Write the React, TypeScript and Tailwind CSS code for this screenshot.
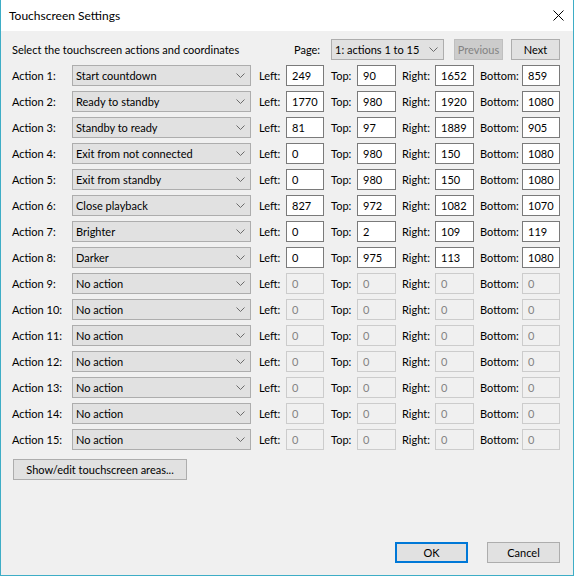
const actions: { name: string; coords: number[] }[] = [
  { name: "Start countdown", coords: [249, 90, 1652, 859] },
  { name: "Ready to standby", coords: [1770, 980, 1920, 1080] },
  { name: "Standby to ready", coords: [81, 97, 1889, 905] },
  { name: "Exit from not connected", coords: [0, 980, 150, 1080] },
  { name: "Exit from standby", coords: [0, 980, 150, 1080] },
  { name: "Close playback", coords: [827, 972, 1082, 1070] },
  { name: "Brighter", coords: [0, 2, 109, 119] },
  { name: "Darker", coords: [0, 975, 113, 1080] },
];

const rows = Array.from({ length: 15 }, (_, i) => actions[i] ?? { name: "No action", coords: [0, 0, 0, 0] });

function Chevron() {
  return (
    <svg width="9" height="5" viewBox="0 0 9 5" className="shrink-0">
      <path d="M0.5 0.5 L4.5 4.5 L8.5 0.5" fill="none" stroke="#6b6b6b" strokeWidth="1" />
    </svg>
  );
}

function Combo({ value, width }: { value: string; width: string }) {
  return (
    <div className={`flex h-[21px] ${width} items-center justify-between border border-[#adadad] bg-[#e1e1e1] pl-[3px] pr-[5px]`}>
      <span>{value}</span>
      <Chevron />
    </div>
  );
}

function Field({ value, enabled, width }: { value: number; enabled: boolean; width: string }) {
  return (
    <div
      className={`flex h-[21px] ${width} items-center pl-[5px] ${
        enabled ? "border border-[#7a7a7a] bg-white text-black" : "border border-[#cccccc] bg-[#f0f0f0] text-[#838383]"
      }`}
    >
      {value}
    </div>
  );
}

export default function App() {
  return (
    <div
      className="flex h-[576px] w-[574px] flex-col border-x border-b border-[#3eadc6] bg-[#f0f0f0] text-[11px] leading-none text-black"
      style={{ fontFamily: 'Lato, "Liberation Sans", sans-serif' }}
    >
      <div className="flex h-[31px] shrink-0 items-center justify-between bg-white pl-[8px] pr-[9px] text-[12px]">
        <span>Touchscreen Settings</span>
        <svg width="11" height="11" viewBox="0 0 11 11">
          <path d="M0.5 0.5 L10.5 10.5 M10.5 0.5 L0.5 10.5" stroke="#000" strokeWidth="1" />
        </svg>
      </div>

      <div className="flex flex-1 flex-col pl-[11px] pt-[7px]">
        <div className="flex h-[22px] items-center">
          <span className="w-[282px]">Select the touchscreen actions and coordinates</span>
          <span className="w-[37px]">Page:</span>
          <Combo value="1: actions 1 to 15" width="w-[113px]" />
          <div className="ml-[10px] flex h-[21px] w-[49px] items-center justify-center border border-[#bfbfbf] bg-[#cccccc] text-[#838383]">
            Previous
          </div>
          <div className="ml-[8px] flex h-[21px] w-[49px] items-center justify-center border border-[#adadad] bg-[#e1e1e1]">
            Next
          </div>
        </div>

        <div className="mt-[5px] flex flex-col gap-[5px]">
          {rows.map((row, i) => {
            const enabled = row.name !== "No action";
            const [l, t, r, b] = row.coords;
            return (
              <div key={i} className="flex h-[21px] items-center">
                <span className="w-[60px]">Action {i + 1}:</span>
                <Combo value={row.name} width="w-[179px]" />
                <span className="ml-[8px] w-[27px]">Left:</span>
                <Field value={l} enabled={enabled} width="w-[38px]" />
                <span className="ml-[7px] w-[26px]">Top:</span>
                <Field value={t} enabled={enabled} width="w-[39px]" />
                <span className="ml-[6px] w-[33px]">Right:</span>
                <Field value={r} enabled={enabled} width="w-[39px]" />
                <span className="ml-[6px] w-[42px]">Bottom:</span>
                <Field value={b} enabled={enabled} width="w-[38px]" />
              </div>
            );
          })}
        </div>

        <div className="ml-[1px] mt-[9px] flex h-[21px] w-[174px] items-center justify-center border border-[#adadad] bg-[#e1e1e1]">
          Show/edit touchscreen areas...
        </div>

        <div className="mt-[62px] flex">
          <div className="ml-[383px] flex h-[21px] w-[73px] items-center justify-center border-2 border-[#0078d7] bg-[#e1e1e1]">
            OK
          </div>
          <div className="ml-[19px] flex h-[21px] w-[73px] items-center justify-center border border-[#adadad] bg-[#e1e1e1]">
            Cancel
          </div>
        </div>
      </div>
    </div>
  );
}
